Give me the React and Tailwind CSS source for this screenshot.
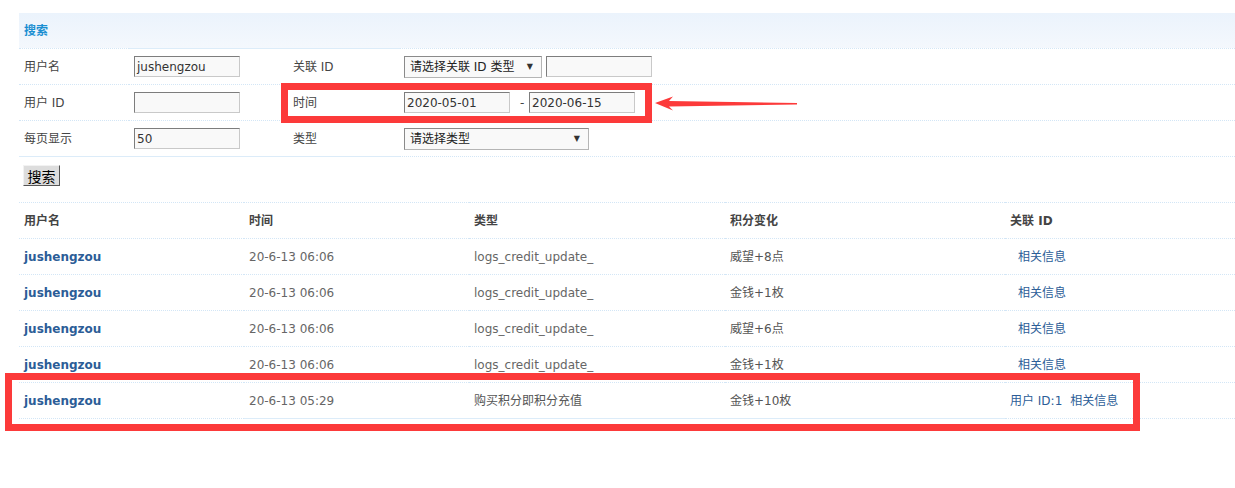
import React from 'react';

const DOT = 'border-t border-dotted border-[#d3e6f6]';
const SOLID = 'border-t border-solid border-[#dcecf9]';

const Input = ({ value = '', w = 'w-[106px]' }) => (
  <div className={`${w} h-[21px] bg-[#f9f9f9] border border-t-[#7d7d7d] border-l-[#7d7d7d] border-r-[#c9c9c9] border-b-[#c9c9c9] px-[2px] flex items-center text-[#333]`}>
    {value}
  </div>
);

const Select = ({ label, w }) => (
  <div className={`${w} h-[22px] bg-[#f9f9f9] border border-[#8a8a8a] border-r-[#b5b5b5] border-b-[#b5b5b5] pl-[5px] pr-[8px] flex items-center justify-between text-[#222]`}>
    <span>{label}</span>
    <span className="text-[8px] text-[#333]">▼</span>
  </div>
);

const FormRow = ({ label, field, label2, field2, borders }) => (
  <div className="flex h-[36px]">
    <div className={`w-[110px] pl-[5px] flex items-center text-[#444] ${borders[0]}`}>{label}</div>
    <div className={`w-[159px] pl-[5px] flex items-center ${borders[1]}`}>{field}</div>
    <div className={`w-[112px] pl-[5px] flex items-center text-[#444] ${borders[1]}`}>{label2}</div>
    <div className={`flex-1 pl-[4px] flex items-center ${borders[0] === SOLID ? DOT : borders[0]}`}>{field2}</div>
  </div>
);

const ROWS = [
  { time: '20-6-13 06:06', type: 'logs_credit_update_', change: '威望+8点' },
  { time: '20-6-13 06:06', type: 'logs_credit_update_', change: '金钱+1枚' },
  { time: '20-6-13 06:06', type: 'logs_credit_update_', change: '威望+6点' },
  { time: '20-6-13 06:06', type: 'logs_credit_update_', change: '金钱+1枚' },
];

const COLS = ['w-[225px]', 'w-[225px]', 'w-[256px]', 'w-[280px]', 'flex-1'];

const Row = ({ cells, last }) => (
  <div className={`flex ${last ? 'h-[37px]' : 'h-[36px]'}`}>
    {cells.map((c, i) => (
      <div
        key={i}
        className={`${COLS[i]} pl-[5px] flex items-center ${DOT} ${
          last ? (i === 0 || i === 4 ? 'border-b border-b-[#d3e6f6]' : 'border-b border-b-[#dcecf9] [border-bottom-style:solid]') : ''
        }`}
      >
        {c}
      </div>
    ))}
  </div>
);

export default function App() {
  return (
    <div className="relative w-[1235px] h-[488px] bg-white overflow-hidden text-[12px] font-['DejaVu_Sans','Noto_Sans_CJK_SC',sans-serif]">
      <div className="ml-[19px] pt-[13px]">
        {/* search panel */}
        <div className="h-[35px] bg-linear-to-b from-[#ebf3fc] to-[#f4f8fd] pl-[5px] flex items-center">
          <span className="font-bold text-[#1a8fd2]">搜索</span>
        </div>
        <FormRow
          label="用户名"
          field={<Input value="jushengzou" />}
          label2="关联 ID"
          field2={
            <div className="flex items-center gap-[4px]">
              <Select label="请选择关联 ID 类型" w="w-[138px]" />
              <Input />
            </div>
          }
          borders={[DOT, SOLID]}
        />
        <FormRow
          label="用户 ID"
          field={<Input />}
          label2="时间"
          field2={
            <div className="flex items-center">
              <Input value="2020-05-01" />
              <span className="w-[19px] pl-[10px] text-[#444]">-</span>
              <Input value="2020-06-15" />
            </div>
          }
          borders={[DOT, DOT]}
        />
        <FormRow
          label="每页显示"
          field={<Input value="50" />}
          label2="类型"
          field2={<Select label="请选择类型" w="w-[185px]" />}
          borders={[DOT, DOT]}
        />
        <div className="flex h-[46px]">
          <div className={`w-[381px] pl-[4px] pt-[8px] ${SOLID}`}>
            <button className="w-[37px] h-[21px] bg-[#dddddd] border border-t-[#f2f2f2] border-l-[#f2f2f2] border-r-[#555] border-b-[#555] text-[14px] leading-none text-black font-['Noto_Sans_CJK_SC',sans-serif]">
              搜索
            </button>
          </div>
          <div className={`flex-1 ${DOT}`} />
        </div>

        {/* result list */}
        <Row
          cells={['用户名', '时间', '类型', '积分变化', '关联 ID'].map((h) => (
            <span className="font-bold text-[#444]">{h}</span>
          ))}
        />
        {ROWS.map((r, i) => (
          <Row
            key={i}
            cells={[
              <a className="font-bold text-[#2c5d97]">jushengzou</a>,
              <span className="text-[#666]">{r.time}</span>,
              <span className="text-[#666]">{r.type}</span>,
              <span className="text-[#555]">{r.change}</span>,
              <a className="ml-[8px] text-[#2c5d97]">相关信息</a>,
            ]}
          />
        ))}
        <Row
          last
          cells={[
            <a className="font-bold text-[#2c5d97]">jushengzou</a>,
            <span className="text-[#666]">20-6-13 05:29</span>,
            <span className="text-[#555]">购买积分即积分充值</span>,
            <span className="text-[#555]">金钱+10枚</span>,
            <span className="text-[#2c5d97]">
              <a>用户 ID:1</a>
              <a className="ml-[8px]">相关信息</a>
            </span>,
          ]}
        />
      </div>

      {/* red annotations */}
      <div className="absolute left-[281px] top-[83px] w-[371px] h-[40px] border-[7px] border-[#fc3a3a]" />
      <div className="absolute left-[5px] top-[373px] w-[1135px] h-[58px] border-[7px] border-[#fc3a3a]" />
      <svg className="absolute left-[650px] top-[90px]" width="150" height="26" viewBox="0 0 150 26">
        <polygon points="5,13 23,6.5 19,11 147,13 147,14.5 19,16.5 23,20.5" fill="#fc3a3a" />
      </svg>
    </div>
  );
}
